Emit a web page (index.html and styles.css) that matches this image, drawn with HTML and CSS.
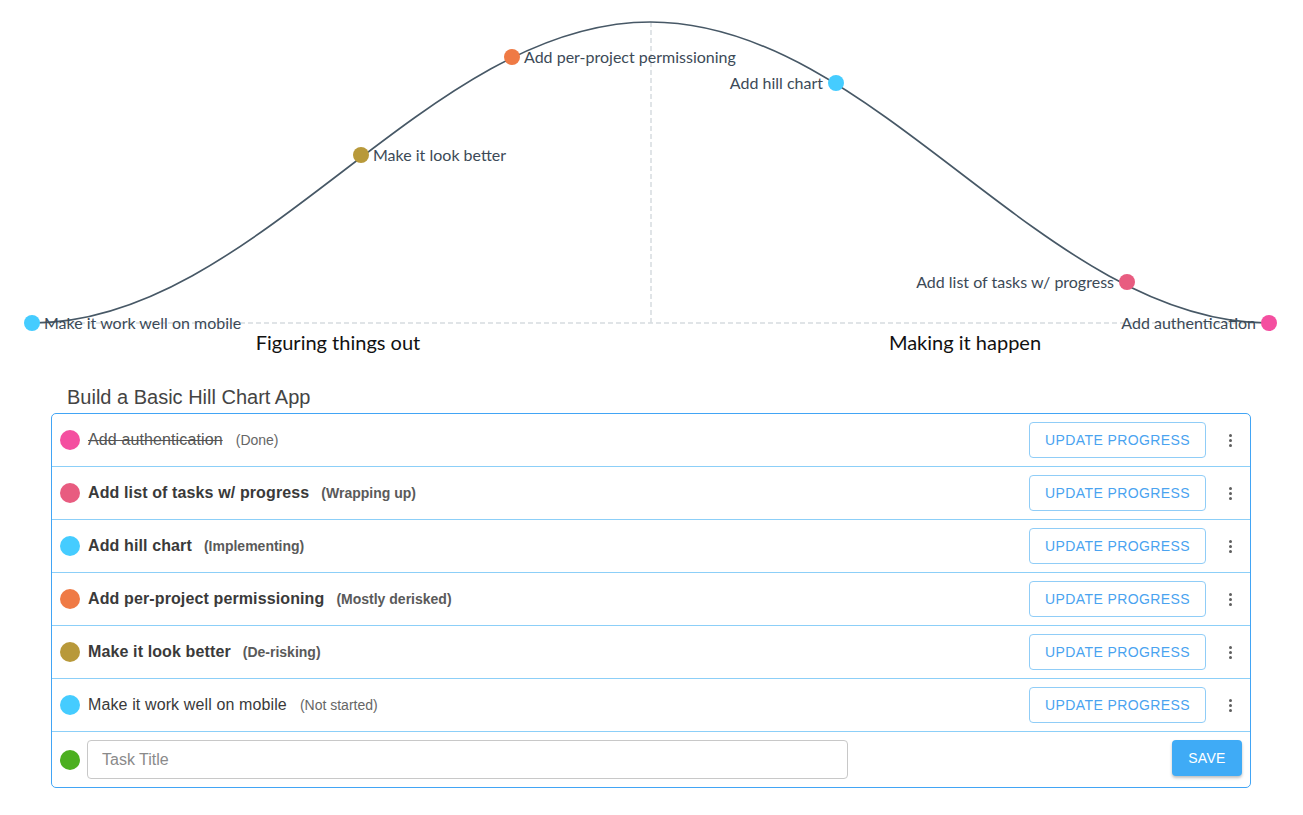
FILE: index.html
```html
<!DOCTYPE html>
<html>
<head>
    <title>Hill Chart</title>
    <link rel="stylesheet" href="styles.css">
</head>
<body>

<svg class="hill-chart" width="1303" height="383" viewBox="0 0 1303 383">
    <line class="axis" x1="32" y1="323" x2="1269" y2="323"></line>
    <line class="axis" x1="651" y1="22" x2="651" y2="323"></line>
    <path class="hill" d="M32 323 C257.1 323 425.4 22 650.5 22 C875.6 22 1043.9 323 1269 323"></path>

    <circle cx="32" cy="323" r="8" fill="#45ccff"></circle>
    <text class="label" x="44" y="322">Make it work well on mobile</text>

    <circle cx="361" cy="155" r="8" fill="#b8993a"></circle>
    <text class="label" x="373" y="154">Make it look better</text>

    <circle cx="512" cy="57" r="8" fill="#ef7a45"></circle>
    <text class="label" x="524" y="56">Add per-project permissioning</text>

    <circle cx="836" cy="83" r="8" fill="#45ccff"></circle>
    <text class="label end" x="823" y="82">Add hill chart</text>

    <circle cx="1127" cy="282" r="8" fill="#e85c80"></circle>
    <text class="label end" x="1114" y="281">Add list of tasks w/ progress</text>

    <circle cx="1269" cy="323" r="8" fill="#f44fa0"></circle>
    <text class="label end" x="1256" y="322">Add authentication</text>

    <text class="phase" x="338" y="342">Figuring things out</text>
    <text class="phase" x="965" y="342">Making it happen</text>
</svg>

<div class="project">
    <h2 class="project-title">Build a Basic Hill Chart App</h2>

    <div class="task-card">
        <div class="task-row">
            <span class="dot" style="background: #f44fa0"></span>
            <span class="task-name done">Add authentication</span>
            <span class="task-status">(Done)</span>
            <button class="btn-outline">Update progress</button>
            <span class="kebab"><i></i><i></i><i></i></span>
        </div>
        <div class="task-row active">
            <span class="dot" style="background: #e85c80"></span>
            <span class="task-name">Add list of tasks w/ progress</span>
            <span class="task-status">(Wrapping up)</span>
            <button class="btn-outline">Update progress</button>
            <span class="kebab"><i></i><i></i><i></i></span>
        </div>
        <div class="task-row active">
            <span class="dot" style="background: #45ccff"></span>
            <span class="task-name">Add hill chart</span>
            <span class="task-status">(Implementing)</span>
            <button class="btn-outline">Update progress</button>
            <span class="kebab"><i></i><i></i><i></i></span>
        </div>
        <div class="task-row active">
            <span class="dot" style="background: #ef7a45"></span>
            <span class="task-name">Add per-project permissioning</span>
            <span class="task-status">(Mostly derisked)</span>
            <button class="btn-outline">Update progress</button>
            <span class="kebab"><i></i><i></i><i></i></span>
        </div>
        <div class="task-row active">
            <span class="dot" style="background: #b8993a"></span>
            <span class="task-name">Make it look better</span>
            <span class="task-status">(De-risking)</span>
            <button class="btn-outline">Update progress</button>
            <span class="kebab"><i></i><i></i><i></i></span>
        </div>
        <div class="task-row">
            <span class="dot" style="background: #45ccff"></span>
            <span class="task-name">Make it work well on mobile</span>
            <span class="task-status">(Not started)</span>
            <button class="btn-outline">Update progress</button>
            <span class="kebab"><i></i><i></i><i></i></span>
        </div>
        <div class="task-row new-task">
            <span class="dot" style="background: #4caf20"></span>
            <input class="task-input" type="text" placeholder="Task Title">
            <button class="btn-save">Save</button>
        </div>
    </div>
</div>

</body>
</html>
```

FILE: styles.css
```css
body {
    margin: 0;
    background: #fff;
    font-family: 'Liberation Sans', Arial, sans-serif;
    color: #333;
}

/* Hill chart */
.hill-chart {
    display: block;
}

.hill-chart .axis {
    stroke: #d6dbe0;
    stroke-width: 1.5;
    stroke-dasharray: 5 3;
}

.hill-chart .hill {
    fill: none;
    stroke: #475866;
    stroke-width: 1.6;
}

.hill-chart .label {
    font-family: 'Lato', 'Noto Sans', sans-serif;
    font-size: 16px;
    fill: #3c4a57;
    dominant-baseline: central;
}

.hill-chart .label.end {
    text-anchor: end;
}

.hill-chart .phase {
    font-family: 'Lato', 'Noto Sans', sans-serif;
    font-size: 20px;
    fill: #111;
    text-anchor: middle;
    dominant-baseline: central;
}

/* Task list */
.project {
    margin-left: 51px;
    width: 1200px;
}

.project-title {
    margin: 2px 0 4px 16px;
    font-size: 20px;
    font-weight: normal;
    line-height: 24px;
    color: #444;
}

.task-card {
    border: 1px solid #42a5f5;
    border-radius: 5px;
}

.task-row {
    display: flex;
    align-items: center;
    height: 52px;
    padding: 0 8px;
    border-bottom: 1px solid #8ccff8;
}

.task-row:last-child {
    border-bottom: none;
}

.dot {
    width: 20px;
    height: 20px;
    border-radius: 50%;
    flex-shrink: 0;
}

.task-name {
    margin-left: 8px;
    font-size: 16px;
    letter-spacing: 0.12px;
    color: #3a3a3a;
}

.task-name.done {
    text-decoration: line-through;
    color: #555;
}

.task-status {
    margin-left: 13px;
    font-size: 14px;
    color: #666;
}

.active .task-name,
.active .task-status {
    font-weight: bold;
}

.active .task-status {
    margin-left: 12px;
    color: #5a5a5a;
}

.btn-outline {
    margin-left: auto;
    width: 177px;
    height: 36px;
    padding: 0;
    background: #fff;
    border: 1px solid #90cdf7;
    border-radius: 4px;
    font-family: 'Liberation Sans', Arial, sans-serif;
    font-size: 14px;
    letter-spacing: 0.4px;
    text-transform: uppercase;
    color: #4aa3f0;
}

.kebab {
    width: 24px;
    margin-left: 12px;
    display: flex;
    flex-direction: column;
    align-items: center;
    gap: 2px;
}

.kebab i {
    display: block;
    width: 3px;
    height: 3px;
    border-radius: 50%;
    background: #5e5e5e;
}

.new-task {
    height: 55px;
    align-items: flex-start;
    padding-top: 8px;
    box-sizing: border-box;
}

.new-task .dot {
    margin-top: 10px;
}

.task-input {
    margin-left: 7px;
    width: 761px;
    height: 39px;
    box-sizing: border-box;
    padding: 0 14px;
    border: 1px solid #c8c8c8;
    border-radius: 4px;
    font-family: 'Liberation Sans', Arial, sans-serif;
    font-size: 16px;
    color: #333;
}

.task-input::placeholder {
    color: #8a8a8a;
}

.btn-save {
    margin-left: auto;
    width: 70px;
    height: 36px;
    padding: 0;
    background: #3fabf6;
    border: none;
    border-radius: 4px;
    box-shadow: 0 2px 3px rgba(0, 0, 0, 0.25);
    font-family: 'Liberation Sans', Arial, sans-serif;
    font-size: 14px;
    letter-spacing: 0.3px;
    text-transform: uppercase;
    color: #fff;
}
```
